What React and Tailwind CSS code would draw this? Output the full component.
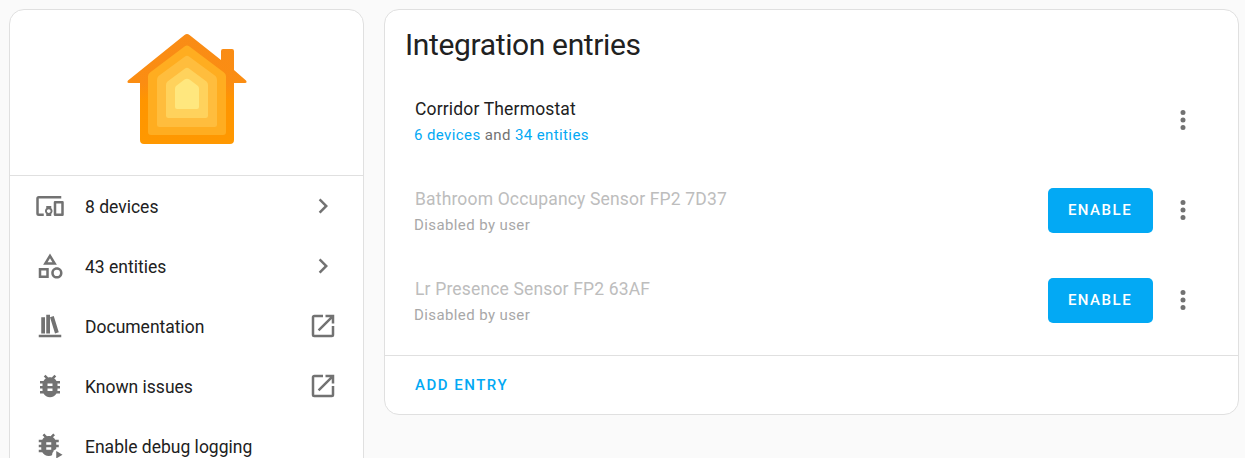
const icons = {
  devices:
    "M3 6H21V4H3A2 2 0 0 0 1 6V18A2 2 0 0 0 3 20H7V18H3V6M13 12H9V13.78C8.39 14.33 8 15.11 8 16C8 16.89 8.39 17.67 9 18.22V20H13V18.22C13.61 17.67 14 16.88 14 16S13.61 14.33 13 13.78V12M11 17.5C10.17 17.5 9.5 16.83 9.5 16S10.17 14.5 11 14.5 12.5 15.17 12.5 16 11.83 17.5 11 17.5M22 8H16A1 1 0 0 0 15 9V19A1 1 0 0 0 16 20H22A1 1 0 0 0 23 19V9A1 1 0 0 0 22 8M21 18H17V10H21V18Z",
  shape:
    "M11,13.5V21.5H3V13.5H11M9,15.5H5V19.5H9V15.5M12,2L17.5,11H6.5L12,2M12,5.86L10.08,9H13.92L12,5.86M17.5,13C20,13 22,15 22,17.5C22,20 20,22 17.5,22C15,22 13,20 13,17.5C13,15 15,13 17.5,13M17.5,15A2.5,2.5 0 0,0 15,17.5A2.5,2.5 0 0,0 17.5,20A2.5,2.5 0 0,0 20,17.5A2.5,2.5 0 0,0 17.5,15Z",
  shelf: "M9 3V18H12V3H9M12 5L16 18L19 17L15 4L12 5M5 5V18H8V5H5M3 19V21H21V19H3Z",
  bug: "M14,12H10V10H14M14,16H10V14H14M20,8H17.19C16.74,7.22 16.12,6.55 15.37,6.04L17,4.41L15.59,3L13.42,5.17C12.96,5.06 12.5,5 12,5C11.5,5 11.04,5.06 10.59,5.17L8.41,3L7,4.41L8.62,6.04C7.88,6.55 7.26,7.22 6.81,8H4V10H6.09C6.04,10.33 6,10.66 6,11V12H4V14H6V15C6,15.34 6.04,15.67 6.09,16H4V18H6.81C7.85,19.79 9.78,21 12,21C14.22,21 16.15,19.79 17.19,18H20V16H17.91C17.96,15.67 18,15.34 18,15V14H20V12H18V11C18,10.66 17.96,10.33 17.91,10H20V8Z",
  open: "M14,3V5H17.59L7.76,14.83L9.17,16.24L19,6.41V10H21V3M19,19H5V5H12V3H5C3.89,3 3,3.9 3,5V19A2,2 0 0,0 5,21H19A2,2 0 0,0 21,19V12H19V19Z",
  next: "M8.59,16.58L13.17,12L8.59,7.41L10,6L16,12L10,18L8.59,16.58Z",
  dots: "M12,16A2,2 0 0,1 14,18A2,2 0 0,1 12,20A2,2 0 0,1 10,18A2,2 0 0,1 12,16M12,10A2,2 0 0,1 14,12A2,2 0 0,1 12,14A2,2 0 0,1 10,12A2,2 0 0,1 12,10M12,4A2,2 0 0,1 14,6A2,2 0 0,1 12,8A2,2 0 0,1 10,6A2,2 0 0,1 12,4Z",
};

function Icon({ name }) {
  return (
    <svg viewBox="0 0 24 24" className="size-[30px] shrink-0 fill-[#727272]">
      {name === "bugPlay" ? (
        <>
          <mask id="play-gap">
            <path d="M0 0H24V24H0Z" fill="white" />
            <circle cx="19.500" cy="19.500" r="5.800" fill="black" />
          </mask>
          <g mask="url(#play-gap)">
            <path transform="translate(-1 -1)" d={icons.bug} />
          </g>
          <path d="M17 16V22L22 19Z" />
        </>
      ) : (
        <path d={icons[name]} />
      )}
    </svg>
  );
}

function HouseLogo() {
  return (
    <svg viewBox="0 0 120 110" className="h-[110px] w-[120px]">
      <defs>
        <linearGradient id="wall" x1="0" y1="0" x2="0" y2="1">
          <stop offset="0" stopColor="#f98c16" />
          <stop offset="0.45" stopColor="#fb8d12" />
          <stop offset="0.6" stopColor="#ff9500" />
          <stop offset="1" stopColor="#ff9800" />
        </linearGradient>
      </defs>
      <path
        fill="url(#wall)"
        d="M57.5 1Q60 -1 62.500 1L94 26V17Q94 15 96 15H105Q107 15 107 17V36L119 46.500Q120.500 49 118 49H107V106Q107 110 103 110H17Q13 110 13 106V49H2Q-0.500 49 1 46.500Z"
      />
      <path fill="#ffad20" d="M57.500 12.500Q60 10.500 62.500 12.500L97 38.500Q99 40 99 42.500V98Q99 101 96 101H24Q21 101 21 98V42.500Q21 40 23 38.500Z" />
      <path fill="#ffbd3d" d="M58 22.500Q60 21 62 22.500L88.500 42Q90 43.500 90 46V90.500Q90 93 87.500 93H32.500Q30 93 30 90.500V46Q30 43.500 31.500 42Z" />
      <path fill="#ffd25c" d="M58 34.500Q60 33 62 34.500L79.500 47.500Q81 48.500 81 51V81.500Q81 84 78.500 84H41.500Q39 84 39 81.500V51Q39 48.500 40.500 47.500Z" />
      <path fill="#ffe77e" d="M57.500 45.500Q60 44 62.500 45.500L71 52Q72 53 72 55V73Q72 75 70 75H50Q48 75 48 73V55Q48 53 49 52Z" />
    </svg>
  );
}

function MenuRow({ icon, label, end }) {
  return (
    <div className="flex h-[60px] items-center pr-[25px] pl-[25px]">
      <Icon name={icon} />
      <span className="ml-5 flex-1 pt-[2px] text-[17.5px] text-[#212121]">{label}</span>
      {end && <Icon name={end} />}
    </div>
  );
}

function Entry({ title, children, disabled }) {
  return (
    <div className="flex h-[90px] items-center pr-10 pl-[29px]">
      <div className="flex flex-1 flex-col pt-1">
        <span className={`pl-px text-[17.5px] leading-[26px] tracking-[0.16px] ${disabled ? "text-[#bdbdbd]" : "text-[#212121]"}`}>
          {title}
        </span>
        <span className={`text-[15px] leading-[26px] tracking-[0.4px] ${disabled ? "text-[#a8a8a8]" : "text-[#727272]"}`}>
          {children}
        </span>
      </div>
      {disabled && (
        <button className="mr-[15px] h-[45px] w-[105px] rounded-[5px] bg-[#03a9f4] pr-px text-[15px] font-medium tracking-[1.5px] text-white">
          ENABLE
        </button>
      )}
      <Icon name="dots" />
    </div>
  );
}

export default function App() {
  return (
    <div className="flex h-[458px] items-start gap-5 overflow-hidden bg-[#fafafa] pt-[9px] pr-[6px] pl-[9px] font-[Roboto,sans-serif]">
      <aside className="h-[600px] w-[355px] shrink-0 rounded-[15px] border border-[#e0e0e0] bg-white">
        <div className="flex h-[166px] justify-center border-b border-[#e0e0e0] pt-[24px]">
          <HouseLogo />
        </div>
        <MenuRow icon="devices" label="8 devices" end="next" />
        <MenuRow icon="shape" label="43 entities" end="next" />
        <MenuRow icon="shelf" label="Documentation" end="open" />
        <MenuRow icon="bug" label="Known issues" end="open" />
        <MenuRow icon="bugPlay" label="Enable debug logging" />
      </aside>
      <main className="h-[406px] flex-1 rounded-[15px] border border-[#e0e0e0] bg-white">
        <h1 className="h-[65px] pt-[11px] pl-5 text-[30px] leading-[48px] tracking-[-0.36px] text-[#212121]">Integration entries</h1>
        <Entry title="Corridor Thermostat">
          <a className="text-[#03a9f4]">6 devices</a> and <a className="text-[#03a9f4]">34 entities</a>
        </Entry>
        <Entry title="Bathroom Occupancy Sensor FP2 7D37" disabled>
          Disabled by user
        </Entry>
        <Entry title="Lr Presence Sensor FP2 63AF" disabled>
          Disabled by user
        </Entry>
        <div className="mt-[10px] flex h-[59px] items-center border-t border-[#e0e0e0] pl-[30px]">
          <button className="text-[15px] font-medium tracking-[1.5px] text-[#03a9f4]">ADD ENTRY</button>
        </div>
      </main>
    </div>
  );
}
